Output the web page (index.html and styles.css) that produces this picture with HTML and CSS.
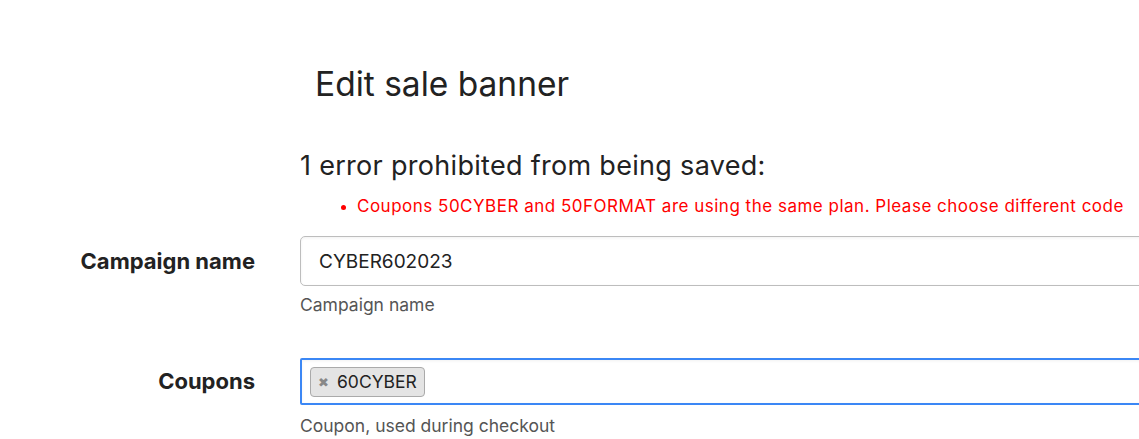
FILE: index.html
```html
<!DOCTYPE html>
<html lang="en">
<head>
    <meta charset="UTF-8">
    <meta name="viewport" content="width=device-width, initial-scale=1.0">
    <title>Edit sale banner</title>
    <link rel="stylesheet" href="styles.css">
</head>
<body>
    <div class="page">
        <h1 class="title">Edit sale banner</h1>
        <div class="errors">
            <h2>1 error prohibited from being saved:</h2>
            <ul>
                <li>Coupons 50CYBER and 50FORMAT are using the same plan. Please choose different code</li>
            </ul>
        </div>
        <form class="form">
            <div class="row">
                <label for="campaign">Campaign name</label>
                <div class="field">
                    <input id="campaign" class="input" type="text" value="CYBER602023">
                    <p class="hint">Campaign name</p>
                </div>
            </div>
            <div class="row">
                <label>Coupons</label>
                <div class="field">
                    <div class="input select focused">
                        <span class="tag"><span class="tag-x">&#x2716;</span>60CYBER</span>
                    </div>
                    <p class="hint">Coupon, used during checkout</p>
                </div>
            </div>
        </form>
    </div>
</body>
</html>
```

FILE: styles.css
```css
body{
    margin: 0;
    font-family: Inter, "Noto Sans", sans-serif;
    color: #222;
    background: #fff;
    overflow: hidden;
}
.page{
    width: 1139px;
    padding-left: 300px;
    box-sizing: border-box;
}
.title{
    margin: 0;
    padding: 64px 0 0 15px;
    font-size: 33.5px;
    font-weight: 400;
    line-height: 40px;
}
.errors h2{
    margin: 45px 0 0;
    font-size: 27px;
    font-weight: 400;
    line-height: 34px;
    letter-spacing: 0.3px;
}
.errors ul{
    margin: 12px 0 0;
    padding-left: 57px;
    color: #f00;
    font-size: 17px;
    line-height: 22px;
    letter-spacing: 0.5px;
    white-space: nowrap;
}
.errors li::marker{
    font-size: 14px;
}
.form{
    margin-left: -300px;
    margin-top: 19px;
}
.row{
    display: grid;
    grid-template-columns: 255px 1fr;
    column-gap: 45px;
    margin-bottom: 43px;
}
.row:last-child{
    margin-bottom: 0;
}
.row label{
    text-align: right;
    font-weight: 700;
    font-size: 22px;
    line-height: 50px;
}
.row + .row label{
    line-height: 47px;
}
.field{
    overflow: hidden;
}
.input{
    box-sizing: border-box;
    width: 900px;
    height: 50px;
    padding: 0 18px;
    border: 1px solid #bdbdbd;
    border-radius: 5px;
    font-family: inherit;
    font-size: 19px;
    color: #222;
    box-shadow: inset 0 1px 3px rgba(0,0,0,0.06);
}
.select{
    display: flex;
    align-items: center;
    height: 47px;
    padding: 0 8px;
}
.focused{
    border: 2px solid #3b87f5;
    border-radius: 2px;
}
.tag{
    display: inline-flex;
    align-items: center;
    height: 30px;
    padding: 0 7px;
    background: #e4e4e4;
    border: 1px solid #aaa;
    border-radius: 4px;
    font-size: 17.5px;
    box-sizing: border-box;
}
.tag-x{
    color: #888;
    font-size: 13px;
    margin-right: 8px;
}
.hint{
    margin: 8px 0 0;
    font-size: 17.5px;
    color: #555;
}
.row:last-child .hint{
    margin-top: 10px;
}
```
